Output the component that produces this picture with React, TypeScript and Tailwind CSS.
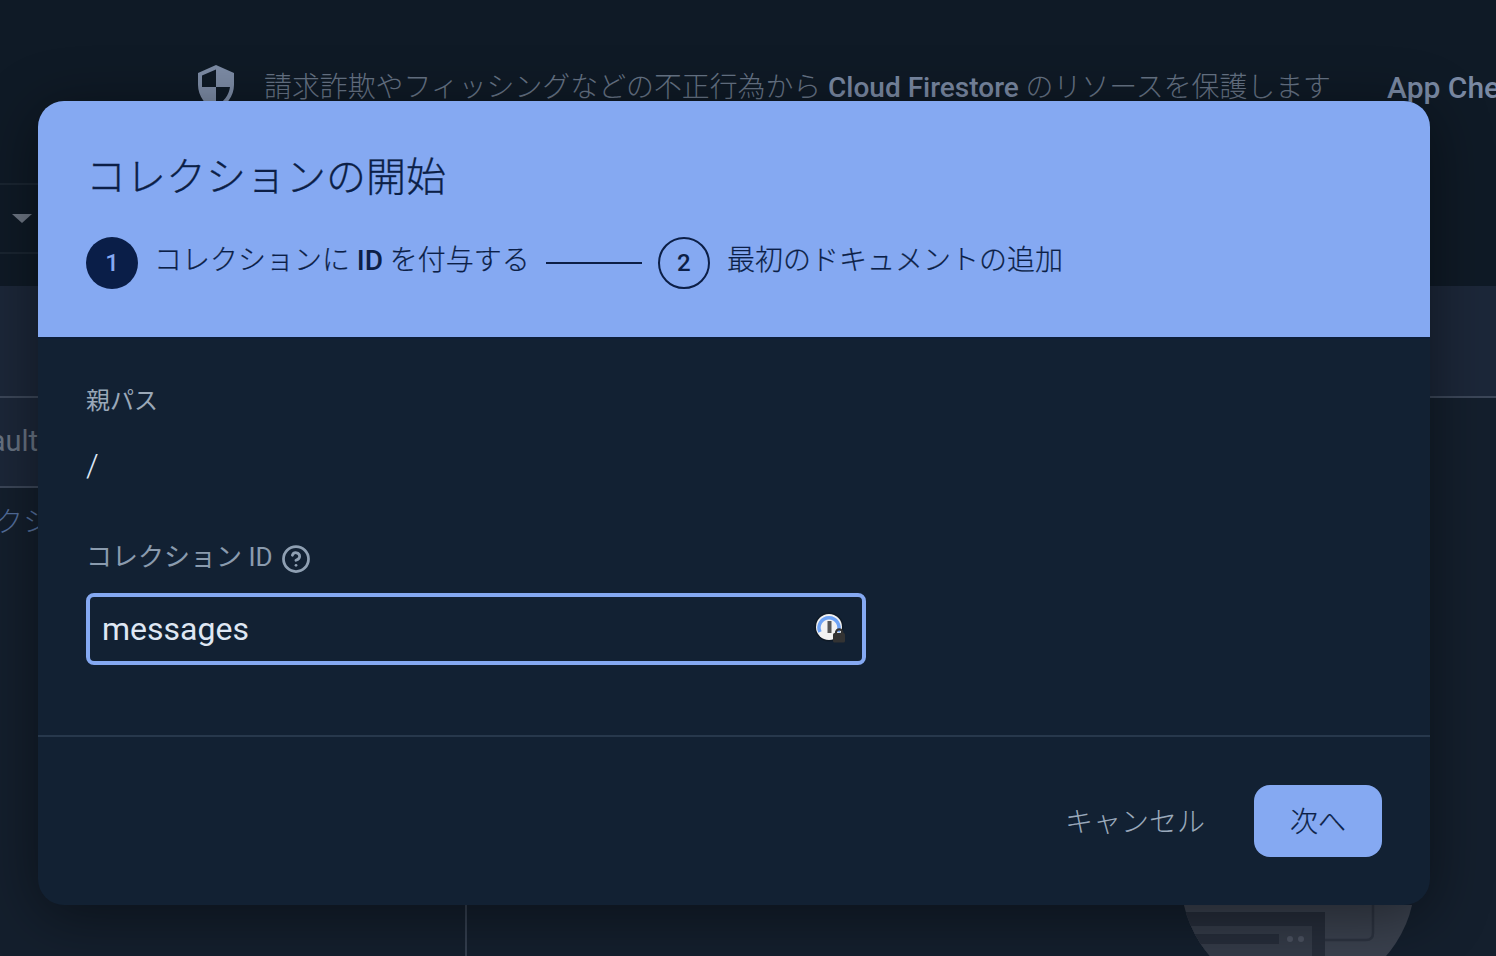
import { HelpCircle } from "lucide-react";

const FONT = "font-['Roboto','Noto_Sans_CJK_JP',sans-serif]";

function ShieldIcon() {
  return (
    <svg width="48" height="48" viewBox="0 0 24 24" className="shrink-0" fill="#7d8ca6">
      <path d="M12 1L3 5v6c0 5.55 3.84 10.74 9 12 5.16-1.26 9-6.45 9-12V5l-9-4zm0 10.99h7c-.53 4.12-3.28 7.79-7 8.94V12H5V6.3l7-3.11v8.8z" />
    </svg>
  );
}

function PasswordManagerIcon() {
  return (
    <svg width="34" height="34" viewBox="0 0 34 34">
      <circle cx="15" cy="15" r="14.5" fill="#0f1a26" />
      <circle cx="15" cy="15" r="13" fill="#f2f2f2" />
      <path d="M6 20 A10 10 0 1 1 24 20" fill="none" stroke="#6ea3f5" strokeWidth="3.5" />
      <rect x="13.5" y="9" width="4" height="12" fill="#555" />
      <path d="M22 22 V20.5 A3.2 3.2 0 0 1 28.4 20.5 V22" fill="none" stroke="#333" strokeWidth="2.2" />
      <rect x="19" y="21" width="12" height="9.5" rx="1.5" fill="#333" />
    </svg>
  );
}

function EmptyStateArt() {
  return (
    <svg width="236" height="51" viewBox="0 0 236 51" className="block">
      <defs>
        <clipPath id="disc">
          <circle cx="118" cy="-26" r="117" />
        </clipPath>
      </defs>
      <g clipPath="url(#disc)">
        <rect width="236" height="51" fill="#3a414e" />
        <rect x="0" y="7" width="145" height="44" fill="#262d3a" />
        <rect x="0" y="21" width="132" height="30" fill="#343b48" />
        <rect x="0" y="29" width="99" height="10" fill="#262d3a" />
        <circle cx="110" cy="34" r="3" fill="#4b5260" />
        <circle cx="121" cy="34" r="3" fill="#4b5260" />
        <path d="M145 35 H186 Q193 35 193 28 V0" fill="none" stroke="#2c3340" strokeWidth="2.5" />
      </g>
    </svg>
  );
}

function Background() {
  return (
    <div className="h-[956px] overflow-hidden bg-[#141f2d] flex flex-col">
      <div className="h-[286px] shrink-0 bg-[#0f1a26] flex flex-col">
        <div className="h-[183px] shrink-0 pt-[63px] pl-[192px] flex items-start whitespace-nowrap">
          <ShieldIcon />
          <span className="ml-[24px] mt-[7px] text-[27.9px] leading-[36px] text-[#667385] font-light">
            請求詐欺やフィッシングなどの不正行為から{" "}
            <span className="font-medium text-[28px] text-[#7a89a3]">Cloud Firestore</span>{" "}
            のリソースを保護します
          </span>
          <span className="ml-[56px] mt-[7px] text-[30px] leading-[36px] font-medium text-[#7a89a3]">App Check</span>
        </div>
        <div className="h-[71px] w-[466px] border-y-2 border-[#1a2531] flex items-center pl-[12px]">
          <div className="w-0 h-0 border-x-[10px] border-x-transparent border-t-[9px] border-t-[#6d7684]" />
        </div>
      </div>
      <div className="h-[112px] shrink-0 bg-[#1c2739] border-b-2 border-[#3c4759]" />
      <div className="flex-1 flex">
        <div className="w-[467px] shrink-0 border-r-2 border-[#333e4e]">
          <div className="h-[90px] bg-[#1c2739] border-b-2 border-[#3c4759] flex items-center justify-end overflow-hidden pr-[427px]">
            <span className="text-[29px] text-[#687382] whitespace-nowrap">default</span>
          </div>
          <div className="h-[70px] flex items-center justify-end overflow-hidden pr-[358px]">
            <span className="text-[28px] text-[#55709e] font-light whitespace-nowrap">コレクション</span>
          </div>
        </div>
        <div className="flex-1 flex justify-end items-end pr-[80px]">
          <EmptyStateArt />
        </div>
      </div>
    </div>
  );
}

export default function App() {
  return (
    <div className={`relative h-[956px] overflow-hidden ${FONT}`}>
      <Background />

      {/* Dialog */}
      <div className="absolute left-[38px] top-[101px] w-[1392px] h-[804px] rounded-[26px] overflow-hidden bg-[#122133] shadow-[0_10px_60px_rgba(0,0,0,0.45)] flex flex-col">
        <div className="h-[238px] shrink-0 bg-[#85a9f2] border-b-2 border-[#0d1e38] flex flex-col pl-[48px]">
          <h1 className="mt-[51px] text-[40px] leading-[52px] font-light [-webkit-text-stroke:0.3px_#0c1f47] text-[#0c1f47]">コレクションの開始</h1>
          <div className="mt-[33px] flex items-center text-[#0c1f47]">
            <div className="w-[52px] h-[52px] rounded-full bg-[#0a1e48] text-[#85a9f2] flex items-center justify-center text-[24px] font-medium">
              1
            </div>
            <span className="ml-[16px] -mt-[4px] text-[28px] leading-[36px] font-light [-webkit-text-stroke:0.2px_#0c1f47] whitespace-nowrap">
              コレクションに <span className="font-medium text-[28px] [-webkit-text-stroke:0]">ID</span> を付与する
            </span>
            <div className="ml-[16px] w-[96px] h-[2px] bg-[#0c1f47]" />
            <div className="ml-[16px] w-[52px] h-[52px] rounded-full border-2 border-[#0c1f47] flex items-center justify-center text-[24px] font-medium">
              2
            </div>
            <span className="ml-[17px] -mt-[4px] text-[28px] leading-[36px] font-light [-webkit-text-stroke:0.2px_#0c1f47] whitespace-nowrap">最初のドキュメントの追加</span>
          </div>
        </div>

        <div className="h-[398px] shrink-0 border-b-2 border-[#27384c] pl-[48px] flex flex-col">
          <div className="mt-[46px] text-[24px] leading-[32px] font-normal text-[#9aa8b8]">親パス</div>
          <div className="mt-[28px] text-[32px] leading-[40px] font-light text-[#dbe6f5]">/</div>
          <div className="mt-[55px] flex items-center text-[26px] leading-[32px] font-normal text-[#8a9bae]">
            <span>コレクション ID</span>
            <HelpCircle size={30} strokeWidth={2.2} className="ml-[8.5px] mt-[4px] text-[#8fa0b3]" />
          </div>
          <div className="mt-[19px] w-[780px] h-[72px] rounded-[8px] border-[4px] border-[#85a9f2] flex items-center pl-[12px] pr-[14px] justify-between">
            <span className="text-[32px] text-[#dfe7f3]">messages</span>
            <PasswordManagerIcon />
          </div>
        </div>

        <div className="flex-1 flex justify-end pr-[48px] pt-[48px]">
          <div className="flex items-center h-[72px]">
            <button className="text-[28px] font-light text-[#9aa9bb] mr-[49px] mt-[3px]">キャンセル</button>
            <button className="w-[128px] h-[72px] pt-[3px] rounded-[16px] bg-[#85a9f2] text-[28px] font-light [-webkit-text-stroke:0.2px_#0c1f47] text-[#0c1f47]">次へ</button>
          </div>
        </div>
      </div>
    </div>
  );
}
